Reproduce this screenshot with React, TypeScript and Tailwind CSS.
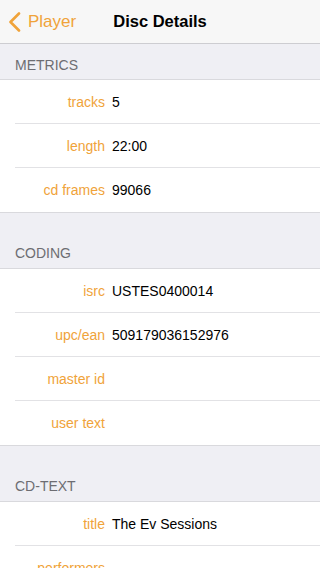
import React from 'react';

type Field = { label: string; value?: string };

const SECTIONS: { title: string; first?: boolean; fields: Field[] }[] = [
  {
    title: 'Metrics',
    first: true,
    fields: [
      { label: 'tracks', value: '5' },
      { label: 'length', value: '22:00' },
      { label: 'cd frames', value: '99066' },
    ],
  },
  {
    title: 'Coding',
    fields: [
      { label: 'isrc', value: 'USTES0400014' },
      { label: 'upc/ean', value: '509179036152976' },
      { label: 'master id' },
      { label: 'user text' },
    ],
  },
  {
    title: 'CD-Text',
    fields: [
      { label: 'title', value: 'The Ev Sessions' },
      { label: 'performers' },
      { label: 'songwriters' },
    ],
  },
];

function NavBar() {
  return (
    <div className="relative h-[44px] bg-[#f7f7f7] border-b border-[#cdcdd1] flex items-center">
      <button type="button" className="flex items-center gap-[7px] pl-[8px] text-[#f0a33a]">
        <svg width="13" height="20" viewBox="0 0 13 20" fill="none" aria-hidden="true">
          <path d="M11 1.5 L2.5 10 L11 18.5" stroke="currentColor" strokeWidth="2.6" strokeLinecap="round" strokeLinejoin="round" />
        </svg>
        <span className="text-[17px] leading-none">Player</span>
      </button>
      <h1 className="absolute inset-x-0 text-center text-[16.5px] font-bold text-black pointer-events-none">
        Disc Details
      </h1>
    </div>
  );
}

function Section({ title, first, fields }: { title: string; first?: boolean; fields: Field[] }) {
  return (
    <div>
      <div className={`${first ? 'h-[35px] pb-[5px]' : 'h-[55px] pb-[6px]'} flex items-end pl-[15px]`}>
        <span className="text-[14px] leading-[17px] uppercase text-[#6d6d72]">{title}</span>
      </div>
      <div className="bg-white border-y border-[#d9d9dd] pl-[15px]">
        {fields.map((f, i) => (
          <div
            key={f.label}
            className={`h-[44px] flex items-center text-[14px] pt-[1px] ${i < fields.length - 1 ? 'border-b border-[#e2e2e5]' : ''}`}
          >
            <span className="w-[90px] text-right text-[#f0a33a] shrink-0">{f.label}</span>
            <span className="ml-[7px] text-black">{f.value ?? ''}</span>
          </div>
        ))}
      </div>
    </div>
  );
}

export default function App() {
  return (
    <div
      className="w-[320px] h-[568px] overflow-hidden bg-[#efeff4]"
      style={{ fontFamily: '"Liberation Sans", Arial, sans-serif' }}
    >
      <NavBar />
      {SECTIONS.map((s) => (
        <Section key={s.title} {...s} />
      ))}
    </div>
  );
}
